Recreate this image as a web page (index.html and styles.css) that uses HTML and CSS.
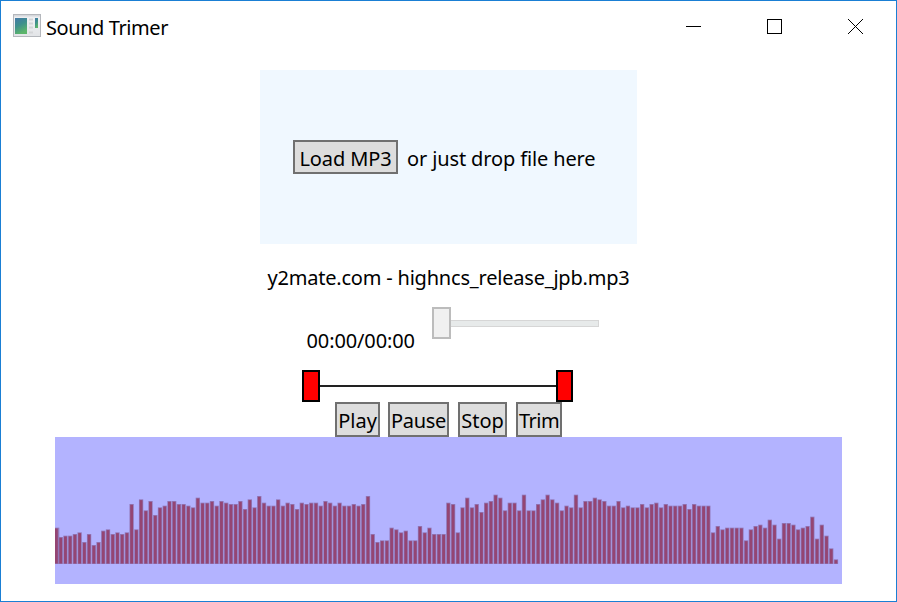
FILE: index.html
```html
<!DOCTYPE html>
<html lang="en">
<head>
<meta charset="utf-8">
<title>Sound Trimer</title>
<link rel="stylesheet" href="styles.css">
</head>
<body>
<div class="window">
  <header class="titlebar">
    <svg class="app-icon" width="28" height="24" viewBox="0 0 28 24">
      <defs>
        <linearGradient id="pane" x1="0" y1="0" x2="0.4" y2="1"><stop offset="0" stop-color="#4479a8"/><stop offset="0.5" stop-color="#3e8f8d"/><stop offset="1" stop-color="#5cb56b"/></linearGradient>
        <linearGradient id="frame" x1="0" y1="0" x2="0" y2="1"><stop offset="0" stop-color="#c9ccd1"/><stop offset="0.15" stop-color="#f1f2f4"/><stop offset="1" stop-color="#e2e4e7"/></linearGradient>
      </defs>
      <rect x="0.5" y="0.5" width="27" height="22" fill="url(#frame)" stroke="#b4b7bc"/>
      <rect x="2" y="4" width="12" height="16" fill="url(#pane)"/>
      <path d="M16 5.5h4M16 9.5h4M16 13.5h4M16 18.5h4" stroke="#d3d5d8" stroke-width="2"/>
      <rect x="22" y="4" width="3" height="10" fill="url(#pane)"/>
    </svg>
    <span class="title">Sound Trimer</span>
    <svg class="controls" width="180" height="20" viewBox="0 0 180 20" fill="none" stroke="#000" shape-rendering="crispEdges">
      <path d="M0 9.5h15"/>
      <rect x="81.5" y="2.5" width="14" height="14"/>
      <path d="M162 2l15 15M177 2l-15 15" shape-rendering="auto"/>
    </svg>
  </header>
  <section class="drop">
    <button class="load">Load MP3</button>
    <span class="hint">or just drop file here</span>
  </section>
  <div class="file">y2mate.com - highncs_release_jpb.mp3</div>
  <div class="playback">
    <span class="time">00:00/00:00</span>
    <div class="slider"><i class="thumb"></i><i class="track"></i></div>
  </div>
  <div class="range"><i class="handle"></i><i class="line"></i><i class="handle end"></i></div>
  <div class="actions">
    <button class="play">Play</button><button class="pause">Pause</button><button class="stop">Stop</button><button class="trim">Trim</button>
  </div>
  <svg class="wave" id="wave" width="787" height="147"></svg>
</div>
<script src="wave.js"></script>
</body>
</html>
```
FILE: styles.css
```css
* { box-sizing: border-box; }
body { margin: 0; font: 20px/28px "Noto Sans", "Open Sans", sans-serif; color: #000; }
.window { width: 897px; height: 602px; border: 1px solid #1a7fd4; background: #fff; display: flex; flex-direction: column; align-items: center; overflow: hidden; }
.titlebar { width: 100%; height: 69px; padding: 12px 30px 0 12px; display: flex; align-items: flex-start; flex: none; }
.app-icon { margin-top: 1px; }
.title { margin: 1px 0 0 5px; letter-spacing: -0.42px; white-space: nowrap; }
.controls { margin: 4px 0 0 auto; }
button { font: inherit; color: #000; background: #ddd; border: 2px solid #707070; padding: 2px 0 0; white-space: nowrap; display: flex; justify-content: center; align-items: center; }
.drop { width: 377px; height: 174px; margin-bottom: 1px; background: #f0f8ff; display: flex; align-items: flex-start; padding: 70px 0 0 33px; flex: none; }
.load { width: 105px; height: 34px; padding-top: 3px; letter-spacing: -0.1px; }
.hint { margin: 5px 0 0 9px; letter-spacing: -0.13px; white-space: nowrap; }
.file { margin-top: 19px; height: 28px; letter-spacing: -0.2px; white-space: nowrap; }
.playback { width: 293px; height: 63px; margin: 15px 0 0 7px; display: flex; flex: none; }
.time { width: 126px; margin-top: 20px; padding-left: 1px; letter-spacing: -0.12px; }
.slider { width: 167px; height: 32px; display: flex; align-items: center; }
.thumb { width: 19px; height: 32px; background: #f0f0f0; border: 2px solid #bcbcbc; }
.track { flex: 1; height: 7px; background: #e7eaea; border: 1px solid #d6d6d6; border-left: 0; }
.range { width: 271px; height: 32px; margin-right: 22px; display: flex; align-items: center; flex: none; }
.handle { width: 18px; height: 32px; background: #f00; border: 2px solid #000; }
.end { width: 17px; }
.line { flex: 1; height: 2px; background: #222; }
.actions { display: flex; height: 35px; flex: none; }
.actions button { height: 35px; }
.play { width: 45px; }
.pause { width: 61px; margin-left: 8px; }
.actions .pause { letter-spacing: -0.3px; }
.stop { width: 49px; margin-left: 9px; }
.trim { width: 46px; margin-left: 9px; }
.actions .trim { letter-spacing: -0.5px; }
.wave { background: #b3b3ff; flex: none; }
.halo { fill: #9278b8; }
.bar { fill: #944573; }
```
FILE: wave.js
```js
// Distance of each bar's top edge from the chart origin, in thirds of a pixel; the baseline is 251.
const tops = [
142,170,166,166,161,156,185,161,194,185,151,147,161,156,161,156,71,147,57,90,62,104,81,76,62,62,71,71,76,81,52,67,67,62,76,62,67,71,71,62,86,57,
81,47,67,76,76,57,76,67,71,86,67,71,67,67,76,62,67,76,67,76,76,71,76,71,47,161,185,180,180,142,147,156,151,180,180,137,156,142,161,161,161,67,
71,156,81,52,81,71,95,67,62,43,52,90,67,67,90,43,90,90,71,57,43,57,67,90,76,81,43,81,62,62,52,57,62,76,76,62,81,76,81,81,71,81,
71,67,81,71,76,76,76,71,86,71,76,76,76,156,137,147,142,142,142,142,180,147,137,133,142,118,133,175,128,128,133,147,142,137,109,175,133,166,204,237];
const wave = document.getElementById("wave");
for (const layer of ["halo", "bar"]) {
  tops.forEach((t, i) => {
    const h = (251 - t) / 3;
    const halo = layer === "halo";
    const r = document.createElementNS("http://www.w3.org/2000/svg", "rect");
    const w = halo ? 4.3 : 2.8;
    r.setAttribute("class", layer);
    r.setAttribute("x", Math.max(0, 1.0 + i * 4.727 - w / 2));
    r.setAttribute("y", 127 - h + (halo ? 0 : 0.8));
    r.setAttribute("width", w);
    r.setAttribute("height", h - (halo ? 0 : 1.3));
    wave.appendChild(r);
  });
}
```
